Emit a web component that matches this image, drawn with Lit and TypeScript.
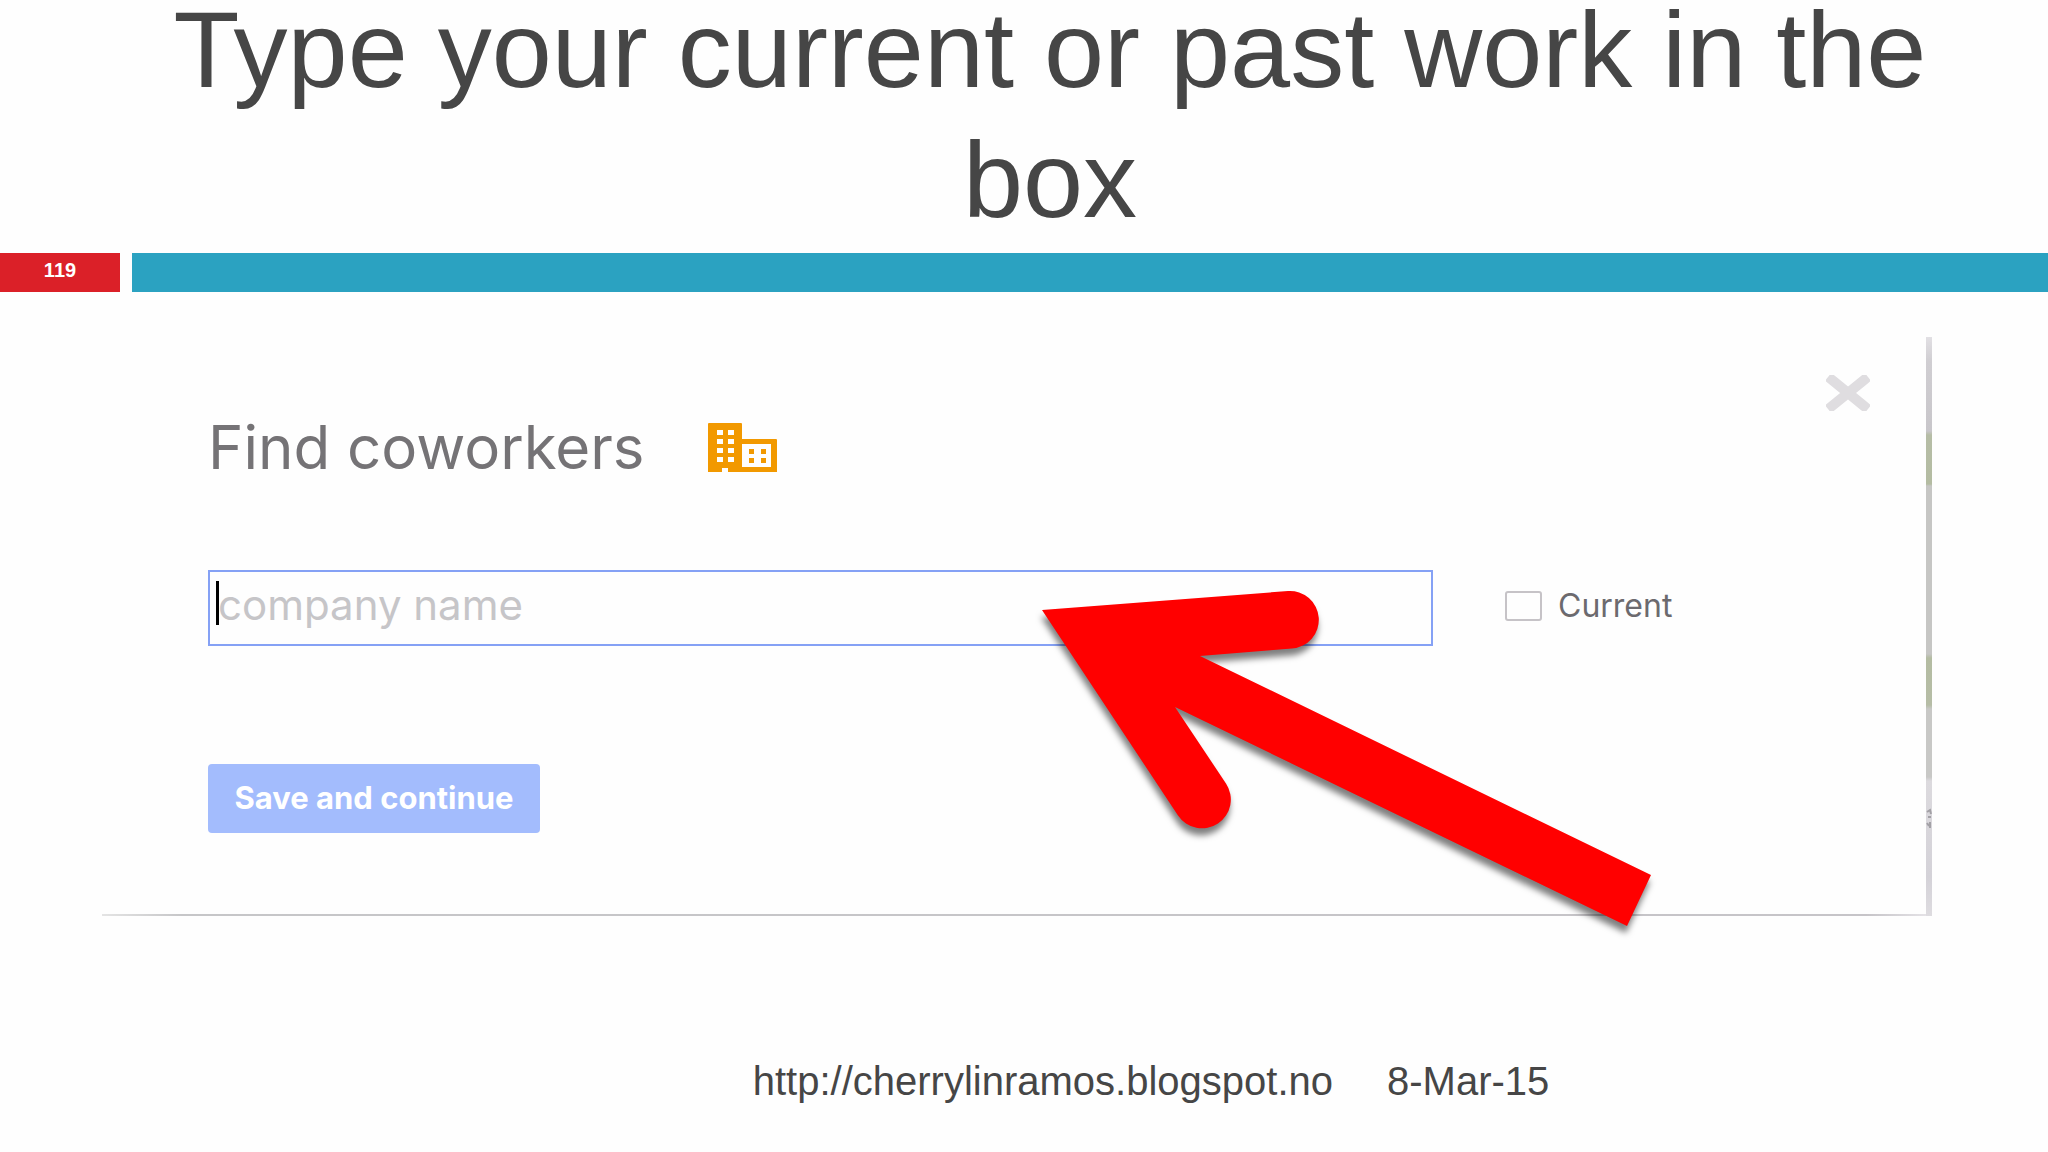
import { LitElement, html, css, svg } from "lit";
import { customElement, state } from "lit/decorators.js";

const windows: Array<[number, number]> = [
  [9, 7], [20, 7], [9, 16], [20, 16], [9, 25], [20, 25], [9, 34], [20, 34],
];
const annexWindows: Array<[number, number]> = [
  [41, 26], [53, 26], [41, 35], [53, 35],
];

@customElement("company-icon")
export class CompanyIcon extends LitElement {
  static styles = css`
    :host {
      display: block;
      line-height: 0;
    }
  `;

  render() {
    return html`
      <svg width="69" height="49" viewBox="0 0 69 49" aria-hidden="true">
        <path fill="#f29900" d="M1 0H33Q34 0 34 1V16H68Q69 16 69 17V49H20V45H14V49H0V1Q0 0 1 0Z" />
        <rect x="34" y="21" width="29" height="23" fill="#fefefe" />
        ${windows.map(([x, y]) => svg`<rect x=${x} y=${y} width="6" height="5" fill="#fefefe" />`)}
        ${annexWindows.map(([x, y]) => svg`<rect x=${x} y=${y} width="5" height="5" fill="#f29900" />`)}
      </svg>
    `;
  }
}

@customElement("pointer-arrow")
export class PointerArrow extends LitElement {
  static styles = css`
    :host {
      display: block;
      line-height: 0;
      pointer-events: none;
    }
    .arrow {
      overflow: visible;
      filter: drop-shadow(-1px 7px 3px rgba(0, 0, 0, 0.5));
    }
  `;

  render() {
    return html`
      <svg class="arrow" width="610" height="336" viewBox="0 0 610 336" aria-hidden="true">
        <path
          fill="#ff0000"
          d="M0 19L246 0A28.800 28.800 0 0 1 250 57.500L158 65L609 284L585 335L133 116L184 192.500A28.800 28.800 0 0 1 136 224.500Z"
        />
      </svg>
    `;
  }
}

@customElement("coworker-dialog")
export class CoworkerDialog extends LitElement {
  @state() private company = "";
  @state() private current = false;

  static styles = css`
    :host {
      display: block;
      font-family: Inter, Roboto, sans-serif;
    }
    .panel {
      position: relative;
      display: grid;
      grid-template-columns: 1fr 6px;
    }
    .body {
      position: relative;
      padding: 38px 56px 83px 106px;
    }
    .body::after {
      content: "";
      position: absolute;
      inset: auto 0 0 0;
      height: 2px;
      background: linear-gradient(to right, #e4e4e4, #c6c6c8 80px, #c6c4c8 calc(100% - 60px), #e4e2e6);
    }
    .edge {
      display: block;
      width: 6px;
      height: 100%;
      background: linear-gradient(
        to bottom,
        #e2e0e4 0,
        #d0ced2 24px,
        #c8c6ca 94px,
        #b6bda6 98px,
        #b4bca2 147px,
        #c6c6c4 149px,
        #c6c6c4 317px,
        #b4bca2 321px,
        #b6bda6 368px,
        #c8c8c6 372px,
        #c8c8c6 440px,
        #dcdade 444px,
        #d4d2d8 540px,
        #dedce0 100%
      );
    }
    .close {
      display: block;
      margin-left: auto;
      padding: 0;
      border: 0;
      background: none;
      width: 44px;
      height: 36px;
      line-height: 0;
      cursor: pointer;
    }
    .heading {
      display: flex;
      align-items: center;
      gap: 63px;
      height: 72px;
    }
    .heading-text {
      margin: 0;
      font-size: 60px;
      line-height: 72px;
      font-weight: 400;
      color: #757376;
    }
    .row {
      display: flex;
      align-items: center;
      gap: 72px;
      margin-top: 87px;
      padding-right: 189px;
    }
    .field {
      position: relative;
      flex: 1;
      display: flex;
    }
    .input {
      box-sizing: border-box;
      width: 100%;
      height: 76px;
      padding: 0 8px 8px;
      border: 2px solid #85a1f5;
      border-radius: 0;
      outline: none;
      background: transparent;
      font-family: inherit;
      font-size: 42px;
      color: #3c3c3c;
    }
    .input::placeholder {
      color: #c6c5c8;
      opacity: 1;
    }
    .caret {
      position: absolute;
      left: 8px;
      top: 11px;
      width: 3px;
      height: 44px;
      background: #000000;
    }
    .check {
      display: flex;
      align-items: center;
      gap: 16px;
      width: 176px;
      padding-bottom: 4px;
      font-size: 32px;
      line-height: 36px;
      color: #6c6a6e;
    }
    .box {
      appearance: none;
      flex: none;
      box-sizing: border-box;
      width: 37px;
      height: 30px;
      margin: 0;
      border: 2px solid #c6c3c7;
      border-radius: 3px;
      background: #fefefe;
    }
    .box:checked {
      background: #85a1f5;
    }
    .save {
      display: block;
      min-width: 332px;
      height: 69px;
      margin-top: 118px;
      padding: 0 24px 2px;
      border: 0;
      border-radius: 4px;
      background: #a3bcfd;
      font-family: inherit;
      font-size: 31px;
      line-height: 36px;
      font-weight: 700;
      color: #ffffff;
      cursor: pointer;
    }
    .pointer {
      position: absolute;
      left: 940px;
      top: 254px;
    }
  `;

  render() {
    return html`
      <section class="panel" aria-labelledby="heading">
        <div class="body">
          <button class="close" aria-label="Close">
            <svg width="44" height="36" viewBox="0 0 44 36" aria-hidden="true">
              <path
                d="M6 5L38 31M38 5L6 31"
                fill="none"
                stroke="#dfdde0"
                stroke-width="10"
                stroke-linecap="square"
              />
            </svg>
          </button>
          <header class="heading">
            <h2 class="heading-text" id="heading">Find coworkers</h2>
            <company-icon></company-icon>
          </header>
          <div class="row">
            <div class="field">
              <input
                class="input"
                type="text"
                aria-label="company name"
                placeholder="company name"
                .value=${this.company}
                @input=${(e: Event) => (this.company = (e.target as HTMLInputElement).value)}
              />
              ${this.company ? "" : html`<span class="caret"></span>`}
            </div>
            <label class="check" for="current">
              <input
                class="box"
                id="current"
                type="checkbox"
                .checked=${this.current}
                @change=${(e: Event) => (this.current = (e.target as HTMLInputElement).checked)}
              />
              Current
            </label>
          </div>
          <button class="save">Save and continue</button>
        </div>
        <div class="edge">
          <svg width="6" height="500" viewBox="0 0 6 500" aria-hidden="true">
            <path
              d="M1 475L4 473L5 477M2 480H5M1 486L3 489M4 485V491"
              fill="none"
              stroke="#a3a1a6"
              stroke-width="2"
            />
          </svg>
        </div>
        <pointer-arrow class="pointer"></pointer-arrow>
      </section>
    `;
  }
}

@customElement("app-root")
export class AppRoot extends LitElement {
  static styles = css`
    :host {
      display: flow-root;
      min-height: 100vh;
      background: #fefefe;
      font-family: "Liberation Sans", Arial, sans-serif;
      color: #464646;
    }
    .title {
      margin: -15px 98px 8px 150px;
      font-size: 108px;
      line-height: 130px;
      font-weight: 400;
      text-align: center;
    }
    .band {
      display: grid;
      grid-template-columns: 120px 1fr;
      gap: 12px;
      height: 39px;
    }
    .number {
      background: #db2028;
      font-size: 20px;
      line-height: 35px;
      font-weight: 700;
      text-align: center;
      color: #ffffff;
    }
    .stripe {
      background: #2ba2c1;
    }
    .dialog {
      margin: 45px 116px 0 102px;
    }
    .footer {
      display: flex;
      justify-content: center;
      gap: 54px;
      margin-top: 142px;
      padding-left: 254px;
      font-size: 40px;
      line-height: 46px;
    }
    .link {
      color: inherit;
      text-decoration: none;
    }
  `;

  render() {
    return html`
      <main>
        <h1 class="title">Type your current or past work in the box</h1>
        <div class="band">
          <div class="number">119</div>
          <div class="stripe"></div>
        </div>
        <coworker-dialog class="dialog"></coworker-dialog>
      </main>
      <footer class="footer">
        <a class="link" href="http://cherrylinramos.blogspot.no">http://cherrylinramos.blogspot.no</a>
        <time datetime="2015-03-08">8-Mar-15</time>
      </footer>
    `;
  }
}
